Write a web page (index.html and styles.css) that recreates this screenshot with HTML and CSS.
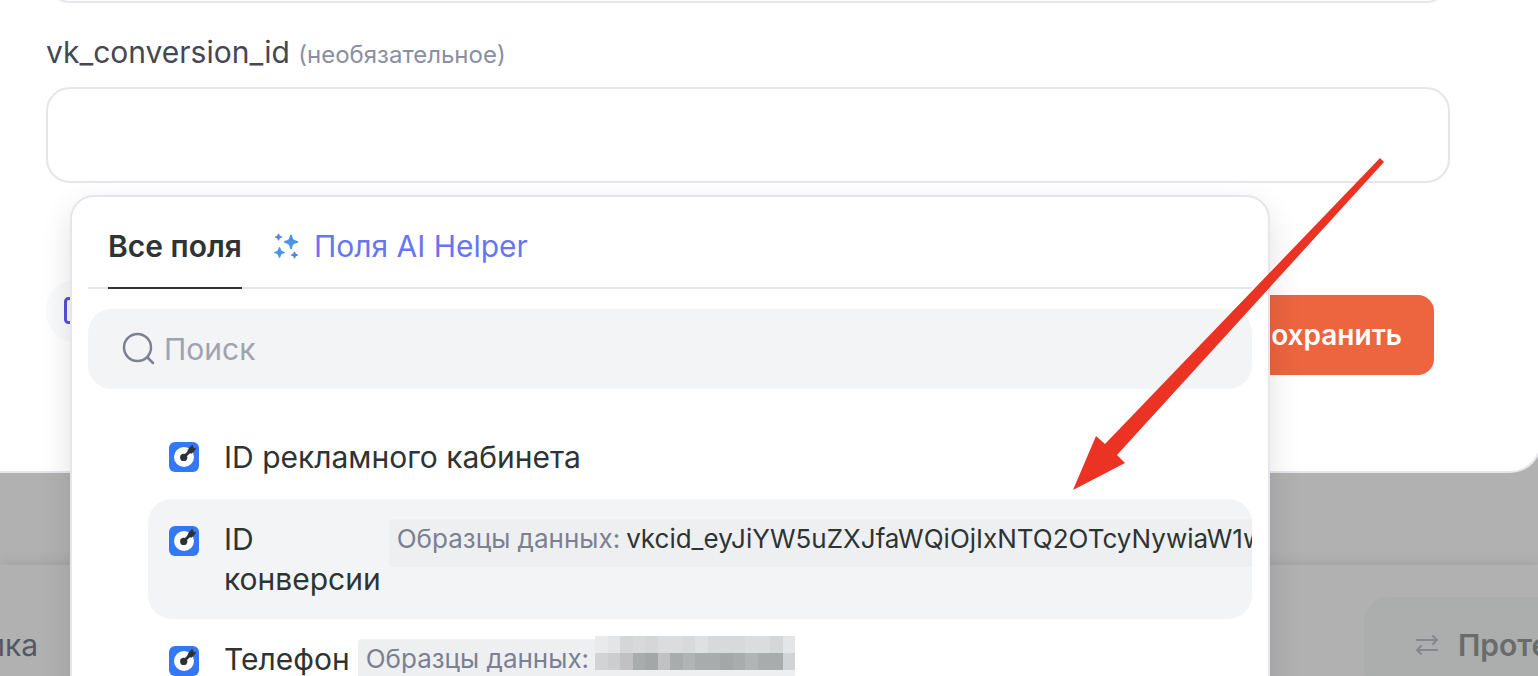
FILE: index.html
```html
<!DOCTYPE html>
<html lang="ru">
  <head>
    <meta charset="UTF-8">
    <meta name="viewport" content="width=device-width, initial-scale=1.0">
    <title>Настройка полей</title>
    <link rel="stylesheet" href="styles.css">
  </head>
  <body>
    <svg class="sprite" aria-hidden="true">
      <symbol id="icon-target" viewBox="0 0 32 32">
        <rect x="1" y="1" width="30" height="30" rx="6" fill="#3478f6"/>
        <circle cx="16" cy="16" r="10" fill="#fff"/>
        <circle cx="15.700" cy="16.400" r="3.600" fill="#2d3133"/>
        <path d="M16 16 L21.500 10.500" stroke="#2d3133" stroke-width="3"/>
        <path d="M19.800 11.800 L20.200 8.500 L24.300 4 L25.200 7 L28 7.600 L24 12.200 Z" fill="#2d3133" stroke="#2d3133" stroke-width=".6" stroke-linejoin="round"/>
      </symbol>
    </svg>

    <main class="modal">
      <input class="field-input field-input-prev" type="text" aria-label="Предыдущее поле">
      <div class="field">
        <label class="field-label" for="conversion">vk_conversion_id <small>(необязательное)</small></label>
        <input class="field-input" id="conversion" type="text">

        <div class="dropdown">
          <div class="tabs" role="tablist">
            <button class="tab active" type="button" role="tab" aria-selected="true">Все поля</button>
            <button class="tab tab-ai" type="button" role="tab" aria-selected="false">
              <svg width="26" height="26" viewBox="0 0 26 26" aria-hidden="true">
                <g fill="#4c94ea">
                  <path d="M17 1.500 Q18 1.500 18.300 3.500 Q18.800 7 22 7.500 Q24.500 8 24.500 9 Q24.500 10 22 10.300 Q18.800 11 18.300 14 Q18 16.200 17 16.200 Q16 16.200 15.700 14 Q15.200 11 12 10.300 Q9.800 10 9.800 9 Q9.800 8 12 7.500 Q15.200 7 15.700 3.500 Q16 1.500 17 1.500 Z"/>
                  <path d="M5.500 14 Q6.300 14 6.600 15.800 Q7 18 9 18.400 Q11 18.700 11 19.500 Q11 20.300 9 20.600 Q7 21 6.600 23.200 Q6.300 25 5.500 25 Q4.700 25 4.400 23.200 Q4 21 2 20.600 Q0 20.300 0 19.500 Q0 18.700 2 18.400 Q4 18 4.400 15.800 Q4.700 14 5.500 14 Z"/>
                </g>
                <g fill="#5484ec">
                  <path d="M4.500 .5 Q5.300 .5 5.500 2 Q5.700 2.800 6.500 3 Q8 3.200 8 4 Q8 4.800 6.500 5 Q5.700 5.200 5.500 6 Q5.300 7.500 4.500 7.500 Q3.700 7.500 3.500 6 Q3.300 5.200 2.500 5 Q1 4.800 1 4 Q1 3.200 2.500 3 Q3.300 2.800 3.500 2 Q3.700 .5 4.500 .5 Z"/>
                  <path transform="translate(16 18)" d="M4.500 .5 Q5.300 .5 5.500 2 Q5.700 2.800 6.500 3 Q8 3.200 8 4 Q8 4.800 6.500 5 Q5.700 5.200 5.500 6 Q5.300 7.500 4.500 7.500 Q3.700 7.500 3.500 6 Q3.300 5.200 2.500 5 Q1 4.800 1 4 Q1 3.200 2.500 3 Q3.300 2.800 3.500 2 Q3.700 .5 4.500 .5 Z"/>
                </g>
              </svg>
              Поля AI Helper
            </button>
          </div>

          <div class="search">
            <svg width="34" height="34" viewBox="0 0 34 34" fill="none" stroke="#7b8092" stroke-width="2.500" stroke-linecap="round" aria-hidden="true">
              <circle cx="15.500" cy="15.500" r="13.500"/>
              <path d="M25.500 25.500 L31 31"/>
            </svg>
            <input type="search" placeholder="Поиск" aria-label="Поиск">
          </div>

          <div class="options">
            <button class="option option-single" type="button">
              <svg class="option-icon" aria-hidden="true"><use href="#icon-target"/></svg>
              <span class="option-name">ID рекламного кабинета</span>
            </button>
            <button class="option selected" type="button">
              <svg class="option-icon" aria-hidden="true"><use href="#icon-target"/></svg>
              <span class="option-name">ID конверсии</span>
              <span class="sample"><span class="sample-title">Образцы данных:</span>vkcid_eyJiYW5uZXJfaWQiOjIxNTQ2OTcyNywiaW1w</span>
            </button>
            <button class="option" type="button">
              <svg class="option-icon" aria-hidden="true"><use href="#icon-target"/></svg>
              <span class="option-name">Телефон</span>
              <span class="sample">
                <span class="sample-title">Образцы данных:</span>
                <svg class="mosaic" width="200" height="34" viewBox="0 0 16 2" preserveAspectRatio="none" shape-rendering="crispEdges" aria-hidden="true">
                  <path fill="#dbdcdd" d="M0 0h16v1H0z"/>
                  <path fill="#e9eaec" d="M0 0h1v1H0z"/>
                  <path fill="#e4e5e7" d="M1 0h1v1H1zM15 0h1v1h-1z"/>
                  <path fill="#d5d6d7" d="M2 0h1v1H2zM4 0h1v1H4zM14 0h1v1h-1z"/>
                  <path fill="#d8d9da" d="M3 0h1v1H3zM7 0h1v1H7zM9 0h3v1H9z"/>
                  <path fill="#dfe0e2" d="M8 0h1v1H8z"/>
                  <path fill="#a8acad" d="M3 1h12v1H3z"/>
                  <path fill="#d2d3d5" d="M0 1h1v1H0zM15 1h1v1h-1z"/>
                  <path fill="#cccdcf" d="M1 1h1v1H1z"/>
                  <path fill="#c0c1c3" d="M2 1h1v1H2zM5 1h1v1H5z"/>
                  <path fill="#b0b4b5" d="M7 1h1v1H7zM12 1h1v1h-1z"/>
                  <path fill="#a3a7a8" d="M4 1h1v1H4zM10 1h1v1h-1z"/>
                </svg>
              </span>
            </button>
          </div>
        </div>
      </div>

      <div class="actions">
        <button class="round-button" type="button" aria-label="Копировать">
          <svg width="28" height="28" viewBox="0 0 28 28" fill="none" stroke="#5850d6" stroke-width="3" aria-hidden="true">
            <rect x="1.500" y="1.500" width="24" height="24" rx="3"/>
          </svg>
        </button>
        <button class="save-button" type="button">Сохранить</button>
      </div>
    </main>

    <footer class="page-footer">
      <a class="footer-link" href="#">Аналитика</a>
      <button class="test-button" type="button">
        <svg width="22" height="22" viewBox="0 0 22 22" fill="none" stroke="#85868e" stroke-width="2" stroke-linecap="round" stroke-linejoin="round" aria-hidden="true">
          <path d="M1 6 H21 M17 2 L21 6 L17 10"/>
          <path d="M21 16 H1 M5 12 L1 16 L5 20"/>
        </svg>
        Протестировать
      </button>
    </footer>

    <svg class="pointer" width="312" height="332" viewBox="0 0 312 332" aria-hidden="true">
      <path fill="#ea3323" d="M1 332 L24 278 L33 286 L308 0 L312 4 L45 297 L53 305 Z"/>
    </svg>
  </body>
</html>
```
FILE: styles.css
```css
:root {
  --text: #2d3433;
  --muted: #7b8092;
  --border: #e5e5eb;
  --surface: #f3f4f6;
  --overlay: #b1b1b1;
  --accent: #ec653e;
}

* {
  box-sizing: border-box;
}

body {
  margin: 0;
  height: 100vh;
  position: relative;
  overflow: hidden;
  font-family: Inter, "Liberation Sans", sans-serif;
  font-size: 30px;
  line-height: 40px;
  color: var(--text);
  background: var(--overlay);
}

button,
input {
  font: inherit;
  color: inherit;
  border: none;
  background: none;
  padding: 0;
  margin: 0;
}

svg {
  display: block;
  flex: none;
}

.sprite {
  position: absolute;
  width: 0;
  height: 0;
}

/* Modal */
.modal {
  margin-right: -4px;
  padding: 0 90px 96px 46px;
  background: #fff;
  border: solid var(--border);
  border-width: 0 2px 2px 0;
  border-bottom-right-radius: 32px;
  display: flow-root;
}

.field-input {
  display: block;
  width: 100%;
  height: 96px;
  padding: 0 24px;
  border: 2px solid var(--border);
  border-radius: 24px;
  outline: none;
}

.field-input-prev {
  margin-top: -93px;
}

.field {
  position: relative;
  padding-top: 29px;
}

.field-label {
  display: block;
  margin-bottom: 12px;
  color: #454854;
}

.field-label small {
  font-size: 24px;
  color: #8b8fa1;
}

.actions {
  display: flex;
  justify-content: space-between;
  align-items: flex-start;
  padding: 96px 16px 0 0;
}

.round-button {
  width: 64px;
  height: 64px;
  padding-left: 18px;
  border-radius: 50%;
  background: #f9fafb;
}

.save-button {
  height: 80px;
  margin-top: 16px;
  padding: 0 32px;
  border-radius: 16px;
  font-size: 28px;
  font-weight: 600;
  color: #fff;
  background: var(--accent);
}

/* Dropdown */
.dropdown {
  position: absolute;
  z-index: 2;
  top: 192px;
  left: 24px;
  width: 1200px;
  padding: 0 16px 16px;
  border: 2px solid var(--border);
  border-radius: 24px;
  background: #fff;
  box-shadow: 0 12px 32px rgba(0, 0, 0, 0.12);
}

.tabs {
  display: flex;
  gap: 32px;
  padding: 0 20px;
  border-bottom: 2px solid var(--border);
}

.tab {
  display: flex;
  align-items: center;
  gap: 14px;
  height: 92px;
  margin-bottom: -2px;
  padding-bottom: 8px;
  padding-top: 16px;
  border-bottom: 2px solid transparent;
}

.tab.active {
  font-weight: 600;
  border-color: var(--text);
}

.tab-ai {
  color: #6875f0;
}

.search {
  display: flex;
  align-items: center;
  gap: 8px;
  height: 80px;
  margin: 20px 0 28px;
  padding: 0 34px;
  border-radius: 24px;
  background: var(--surface);
}

.search input {
  flex: 1;
  outline: none;
}

.search input::placeholder {
  color: #a0a3af;
  opacity: 1;
}

.options {
  padding-left: 60px;
}

.option {
  display: flex;
  align-items: flex-start;
  width: 100%;
  padding: 20px;
  border-radius: 24px;
  overflow: hidden;
  text-align: left;
}

.option.selected {
  background: var(--surface);
}

.option-icon {
  width: 32px;
  height: 32px;
  margin: 6px 24px 0 0;
}

.option-single {
  margin-bottom: 2px;
  align-items: center;
}

.option-single .option-icon {
  margin-top: 0;
}

.sample {
  display: flex;
  flex: none;
  gap: 6px;
  height: 48px;
  margin-left: 8px;
  padding-left: 8px;
  border-radius: 4px;
  font-size: 26px;
  white-space: nowrap;
  background: #eeeff1;
}

.sample-title {
  color: var(--muted);
}

.mosaic {
  margin-top: -3px;
}

/* Page under the overlay */
.page-footer {
  display: flex;
  justify-content: space-between;
  height: 160px;
  margin-top: 92px;
  padding-top: 32px;
  background: var(--overlay);
  box-shadow: 0 -2px 12px rgba(0, 0, 0, 0.1);
}

.footer-link {
  display: flex;
  justify-content: flex-end;
  align-items: center;
  width: 38px;
  height: 96px;
  overflow: hidden;
  color: #535865;
  text-decoration: none;
}

.test-button {
  display: flex;
  align-items: center;
  gap: 20px;
  width: 174px;
  height: 96px;
  padding-left: 52px;
  border-radius: 24px 0 0 24px;
  font-weight: 600;
  color: #696c6b;
  background: #acaead;
  overflow: hidden;
}

/* Red arrow above everything */
.pointer {
  position: absolute;
  z-index: 3;
  top: 158px;
  left: 1072px;
}
```
